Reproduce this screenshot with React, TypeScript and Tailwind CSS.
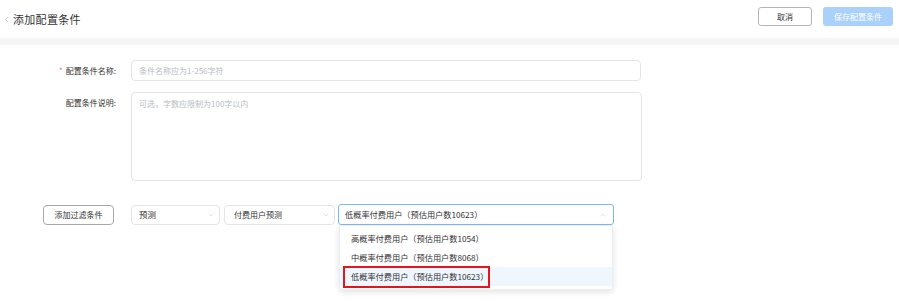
import { ChevronDown, ChevronUp, ChevronLeft } from "lucide-react";

const OPTIONS = [
  { label: "高概率付费用户（预估用户数1054）" },
  { label: "中概率付费用户（预估用户数8068）" },
  { label: "低概率付费用户（预估用户数10623）", active: true },
];

export default function App() {
  return (
    <div className="w-[899px] h-[302px] overflow-hidden bg-white text-[#333] font-['Noto_Sans_CJK_SC',sans-serif]">
      {/* header */}
      <header className="h-[38px] flex items-center pl-[2px] pr-[6px]">
        <ChevronLeft className="w-[9px] h-[9px] text-[#999]" strokeWidth={1.5} />
        <h1 className="ml-[2px] text-[11px] text-[#333] tracking-[0.3px]">添加配置条件</h1>
        <div className="ml-auto flex items-center gap-[11px] -mt-[5px]">
          <button className="w-[54px] h-[19px] rounded-[3px] border border-[#b5b5b5] text-[8px] text-[#333] flex items-center justify-center">
            取消
          </button>
          <button className="w-[70px] h-[19px] rounded-[3px] bg-[#a9d1fb] text-[8px] text-white flex items-center justify-center">
            保存配置条件
          </button>
        </div>
      </header>
      <div className="h-[7px] bg-[#f5f5f5]" />

      {/* form */}
      <section className="pt-[15px]">
        <div className="flex items-center">
          <label className="w-[116px] text-right text-[8px] text-[#333]">
            <span className="text-[#f56c6c] mr-[3px]">*</span>配置条件名称:
          </label>
          <div className="ml-[15px] w-[510px] h-[21px] rounded-[4px] border border-[#e2e4e8] flex items-center px-[7px] text-[8px] text-[#b8bcc4]">
            条件名称应为1-256字符
          </div>
        </div>

        <div className="flex items-start mt-[11px]">
          <label className="w-[116px] text-right text-[8px] text-[#333] mt-[5px]">配置条件说明:</label>
          <div className="ml-[15px] w-[511px] h-[89px] rounded-[4px] border border-[#e2e4e8] px-[7px] pt-[5px] text-[8px] text-[#b8bcc4]">
            可选，字数应限制为100字以内
          </div>
        </div>

        {/* filter row */}
        <div className="flex items-center mt-[23px]">
          <button className="ml-[43px] w-[71px] h-[20px] rounded-[4px] border border-[#a8a8a8] text-[8px] text-[#333] flex items-center justify-center">
            添加过滤条件
          </button>
          <div className="ml-[17px] w-[89px] h-[20px] rounded-[4px] border border-[#e2e4e8] flex items-center pl-[7px] pr-[4px] text-[8.5px]">
            <span className="flex-1">预测</span>
            <ChevronDown className="w-[8px] h-[8px] text-[#c0c4cc]" strokeWidth={1.5} />
          </div>
          <div className="ml-[4px] w-[111px] h-[20px] rounded-[4px] border border-[#e2e4e8] flex items-center pl-[9px] pr-[4px] text-[8px]">
            <span className="flex-1">付费用户预测</span>
            <ChevronDown className="w-[8px] h-[8px] text-[#c0c4cc]" strokeWidth={1.5} />
          </div>
          <div className="relative ml-[3px] w-[276px]">
            <div className="h-[21px] rounded-[3px] border border-[#7fb8f7] flex items-center pl-[6px] pr-[6px] text-[8.2px]">
              <span className="flex-1">低概率付费用户（预估用户数10623）</span>
              <ChevronUp className="w-[8px] h-[8px] text-[#c0c4cc]" strokeWidth={1.5} />
            </div>
            {/* dropdown */}
            <div className="absolute left-[1px] right-[1px] top-[21px] rounded-[3px] border border-[#ebeef5] bg-white shadow-[0_2px_6px_rgba(0,0,0,0.12)] py-[3px]">
              {OPTIONS.map((o) => (
                <div
                  key={o.label}
                  className={`h-[19px] flex items-center pl-[11px] text-[8.2px] text-[#333] ${o.active ? "bg-[#f0f6fe]" : ""}`}
                >
                  {o.label}
                </div>
              ))}
              <div className="absolute left-[3px] top-[40px] w-[147px] h-[22px] border-2 border-[#e3171b]" />
            </div>
          </div>
        </div>
      </section>
    </div>
  );
}
